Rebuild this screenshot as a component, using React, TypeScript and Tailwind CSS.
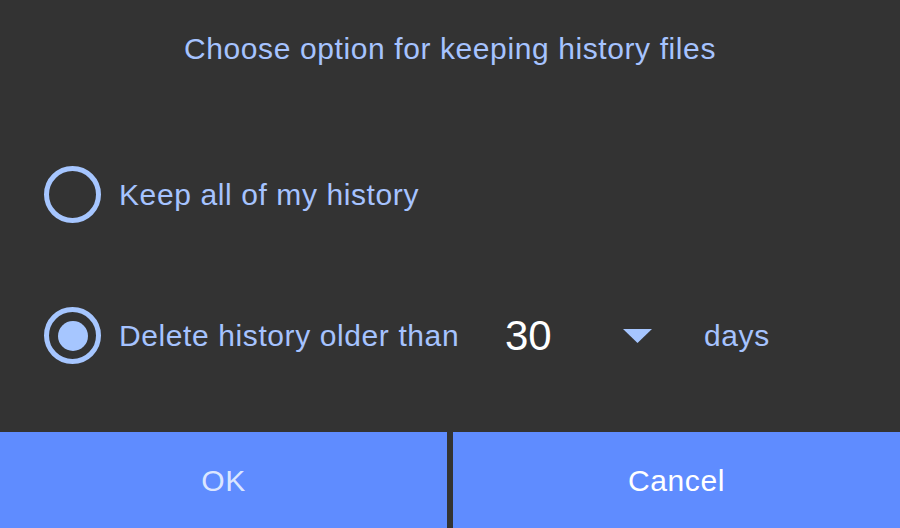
import React from "react";

export default function App() {
  return (
    <div className="w-[900px] h-[528px] bg-[#333333] flex flex-col overflow-hidden font-['Liberation_Sans',Arimo,Arial,sans-serif] tracking-[0.6px]">
      <div className="flex-1 flex flex-col">
        <div className="h-[96px] flex items-center justify-center text-[30px] text-[#a6c3ff]">
          Choose option for keeping history files
        </div>
        <div className="mt-[70px] h-[57px] flex items-center pl-[44px]">
          <div className="w-[57px] h-[57px] shrink-0 rounded-full border-[5px] border-[#a6c6ff]" />
          <span className="ml-[18px] text-[30px] text-[#a6c3ff]">Keep all of my history</span>
        </div>
        <div className="mt-[84px] h-[57px] flex items-center pl-[44px]">
          <div className="w-[57px] h-[57px] shrink-0 rounded-full border-[5px] border-[#a6c6ff] flex items-center justify-center">
            <div className="w-[30px] h-[30px] rounded-full bg-[#a6c6ff]" />
          </div>
          <span className="ml-[18px] w-[386px] shrink-0 text-[30px] text-[#a6c3ff]">Delete history older than</span>
          <span className="w-[118px] shrink-0 text-[42px] text-white leading-none tracking-normal">30</span>
          <svg width="29" height="16" viewBox="0 0 29 16" className="shrink-0">
            <polygon points="0,1 29,1 14.5,15" fill="#a6c6ff" />
          </svg>
          <span className="ml-[52px] text-[30px] text-[#a6c3ff]">days</span>
        </div>
      </div>
      <div className="h-[96px] flex">
        <button className="w-[447px] h-full bg-[#5f8cff] text-[30px] text-[#dbe6ff] flex items-center justify-center">OK</button>
        <div className="w-[6px] h-full bg-[#333333]" />
        <button className="flex-1 h-full bg-[#5f8cff] text-[30px] text-white flex items-center justify-center">Cancel</button>
      </div>
    </div>
  );
}
